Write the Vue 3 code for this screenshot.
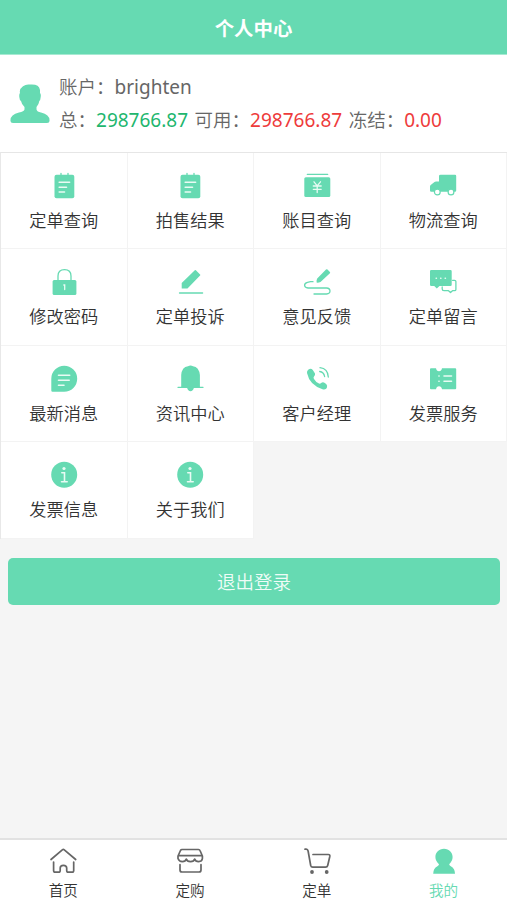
<template>
    <div class="page">
        <header class="header">个人中心</header>

        <section class="account">
            <svg class="avatar" viewBox="0 0 40 40">
                <path
                    d="M13 2.200Q16 0 20 .6Q29 -.2 30 6V9Q31.200 10 30.700 13Q30.500 16 29.300 17Q29 20 26.500 23V25.500Q27 27.800 31 28.500Q40 30.500 39.500 37Q39.500 39 37 39H3Q.5 39 .5 37Q0 30.500 9 28.500Q14 27.500 14.500 25.500V23Q11.500 20 11 17Q9.500 16 9.300 13Q9 10 10 9Q9 5 13 2.200Z" />
            </svg>
            <div class="info">
                <div class="line">账户：<span class="latin">{{ user.name }}</span></div>
                <div class="line">
                    总：<span class="latin green">{{ user.total }}</span>
                    <span class="gap">可用：</span><span class="latin red">{{ user.usable }}</span>
                    <span class="gap">冻结：</span><span class="latin red">{{ user.frozen }}</span>
                </div>
            </div>
        </section>

        <nav class="menu">
            <div v-for="item in menus" :key="item.name" class="cell">
                <svg class="icon" viewBox="0 0 26 26" v-html="icons[item.icon]"></svg>
                <span>{{ item.name }}</span>
            </div>
        </nav>

        <button class="logout">退出登录</button>

        <footer class="tabbar">
            <div
                v-for="tab in tabs"
                :key="tab.name"
                class="tab"
                :class="{ active: current === tab.name }"
                @click="current = tab.name"
            >
                <svg class="icon" viewBox="0 0 26 26" v-html="icons[tab.icon]"></svg>
                <span>{{ tab.name }}</span>
            </div>
        </footer>
    </div>
</template>

<script setup>
import { reactive, ref } from 'vue'

const user = reactive({
    name: 'brighten',
    total: '298766.87',
    usable: '298766.87',
    frozen: '0.00',
})

const current = ref('我的')

const menus = [
    { name: '定单查询', icon: 'note' },
    { name: '拍售结果', icon: 'note' },
    { name: '账目查询', icon: 'bill' },
    { name: '物流查询', icon: 'truck' },
    { name: '修改密码', icon: 'lock' },
    { name: '定单投诉', icon: 'edit' },
    { name: '意见反馈', icon: 'feedback' },
    { name: '定单留言', icon: 'chat' },
    { name: '最新消息', icon: 'news' },
    { name: '资讯中心', icon: 'bell' },
    { name: '客户经理', icon: 'phone' },
    { name: '发票服务', icon: 'ticket' },
    { name: '发票信息', icon: 'about' },
    { name: '关于我们', icon: 'about' },
]

const tabs = [
    { name: '首页', icon: 'home' },
    { name: '定购', icon: 'shop' },
    { name: '定单', icon: 'cart' },
    { name: '我的', icon: 'me' },
]

// 圖示，f = 填色，s = 線條，w = 白色線條
const icons = {
    note: `<rect class="f" x="3.500" y="1.800" width="19.800" height="23.400" rx="2"/>
        <path class="s thin" d="M10 .3V3M17 .3V3"/>
        <path class="w" d="M8.200 9.300H18.600M8.200 14.300H15.500M8.200 19H13.500"/>`,
    bill: `<path class="s thin" d="M3.300 1.300H23.700"/>
        <rect class="f" x=".3" y="4.300" width="26" height="19.700" rx="1.500"/>
        <path class="w thin" d="M10 8.800L13.200 12.800L16.500 8.800M9.300 13H17.200M9.300 16.300H17.200M13.200 13V19.500"/>`,
    truck: `<path class="f" d="M10.500 1.700H25Q26.200 1.700 26.200 3V17.500Q26.200 18.800 25 18.800H1.200Q0 18.800 0 17.500V13.500Q0 12.500 1 11.800L4.500 9Q5 8.500 6 8.500H9V3Q9 1.700 10.500 1.700Z"/>
        <circle class="hole" cx="7.300" cy="19" r="2.900"/>
        <circle class="hole" cx="21" cy="19" r="2.900"/>`,
    lock: `<path class="s thin" d="M7 12V7Q7 .7 13.500 .7T20 7V12"/>
        <rect class="f" x="1.600" y="11" width="23.800" height="15" rx="1.500"/>
        <path class="w thin" d="M12.800 16H13.700V20.500"/>`,
    edit: `<path class="f" d="M17.800 1.300Q18.300 .8 18.900 1.300L23.100 5.500Q23.600 6 23.100 6.600L10.500 19.500H4.700V14Z"/>
        <path class="s thin" d="M2.500 24H25.600"/>`,
    feedback: `<path class="f" d="M22 .5Q22.800-.2 23.500.5L25.900 2.900Q26.500 3.700 25.900 4.300L16.500 13Q14 14 12.600 13.500Q12.300 11 13.200 9.500Z"/>
        <path class="s thin" d="M9 12.700H6.500L3.500 13.300Q.6 14 .6 16.300T4 19H22.500Q26 19.300 26 22T22.500 25H10"/>`,
    chat: `<path class="f" d="M1.200 1H20.500Q21.700 1 21.700 2.200V15.800Q21.700 17 20.500 17H9.500L6.800 19.500L4.200 17H1.200Q0 17 0 15.800V2.200Q0 1 1.200 1Z"/>
        <path class="s thin" d="M22.500 11.300H24.500Q25.900 11.300 25.900 12.500V20.500Q25.900 21.700 24.500 21.700H22.500L20.500 23.500L18.500 21.700H14Q12.200 21.700 12.200 20V18"/>
        <path class="w" d="M6.200 9.200H6.400M10.700 9.200H10.900M15.200 9.200H15.400"/>`,
    news: `<path class="f" d="M13.200-.3A13 13 0 0 1 13.200 25.700H1.500Q.3 25.700 .3 24.500V12.700A13 13 0 0 1 13.200-.3Z"/>
        <path class="w" d="M7.500 9.200H18.700M7.500 14.200H18.200M7.500 19.200H13"/>`,
    bell: `<path class="f" d="M4.200 21V9Q4.800 1 11 .2Q13.500-1 16 .2Q22 1 22.900 9V21L17 21.500Q16 25.300 13.500 25.300T10 21.500Z"/>
        <path class="s thin" d="M1 21.300H26"/>`,
    phone: `<path class="f" d="M4.500 3.500Q7 2 8.800 4L11 7.500Q11.500 9 10 10.500Q9 11.500 10 13Q12 16.500 15 17.500Q16 18 17.500 16.700Q18.500 15.800 20 16.500L22.200 18Q23.800 19.500 22.800 22Q21.800 24 18.500 23.200Q5.500 19 3 7Q2.700 4.800 4.500 3.500Z"/>
        <path class="s thin" d="M15.700 5.500Q19.800 6 20.600 10.500M16 1.700Q23.800 2.500 24.300 11"/>`,
    ticket: `<path class="f" d="M1 2.300H6Q6.500 5.200 9 5.200T12 2.300H25.200Q26.200 2.300 26.200 3.300V22.200Q26.200 23.200 25.200 23.200H12Q11.500 20.300 9 20.300T6 23.200H1Q0 23.200 0 22.200V3.300Q0 2.300 1 2.300Z"/>
        <path class="w" d="M8.900 10H9.100M8.900 15.300H9.100M14 10H21.500M14 15.300H21.500"/>`,
    about: `<circle class="f" cx="13.200" cy="12.800" r="13"/>
        <circle class="dot" cx="13" cy="6.500" r="1.600"/>
        <path class="w" d="M10.800 10.800H13.500V19.500M10.500 19.700H16.200"/>`,
    home: `<path class="s" d="M1 11.500L12.300 1.800Q13.300 1 14.300 1.800L25.700 11.500M3.600 14V22.500Q3.600 24.200 5.300 24.200H8.500Q10.200 24.200 10.200 22.500V20Q10.200 17.300 13.400 17.300T16.700 20V22.500Q16.700 24.200 18.300 24.200H22Q23.700 24.200 23.700 22.500V14"/>`,
    shop: `<path class="s" d="M5 1.500H21.500Q22.600 1.500 23 2.500L25.400 8V10.500Q25 13.600 21.700 13.600T17.700 11Q17 13.600 13.500 13.600T9.300 11Q8.500 13.600 5.300 13.600T1 10.500V8L3.500 2.500Q4 1.500 5 1.500ZM1.500 7.700H25M3 16.700V22Q3 24 5 24H22Q24 24 24 22V16.700"/>`,
    cart: `<path class="s" d="M1 1.200H2.200Q3.700 1.300 4.100 3L6.700 17.500Q7.100 19.200 8.700 19.200H21.500Q23.300 19.200 23.700 17.500L25.800 8.500Q26.200 6.500 24.300 6.500H9"/>
        <circle class="f" cx="8" cy="24" r="1.900"/><circle class="f" cx="22.700" cy="24" r="1.900"/>`,
    me: `<path class="f" d="M13 .8C18.100.8 21.600 4.500 21.600 9Q21.600 13 18.200 16.200Q18.200 17.300 19.800 18.200Q24 20.500 24 25.700H2.200Q2.200 20.500 6.400 18.200Q8 17.300 8 16.200Q4.400 13 4.400 9C4.400 4.500 7.900 .8 13 .8Z"/>`,
}
</script>

<style>
body {
    margin: 0;
    background-color: #f5f5f5;
}
</style>

<style scoped>
.page {
    display: flex;
    flex-direction: column;
    height: 100vh;
    background-color: #f5f5f5;
    font-family: 'Noto Sans CJK SC', sans-serif;
    font-weight: 350;
    color: #333;
}

.header {
    flex: none;
    height: 54px;
    line-height: 56px;
    background-color: #66dab2;
    color: #fff;
    font-size: 19.400px;
    font-weight: bold;
    text-align: center;
    border-bottom: 1px solid #a6ead2;
}

.account {
    display: flex;
    flex: none;
    box-sizing: border-box;
    height: 97px;
    padding: 15px 0 0 10px;
    background-color: #fff;
}

.avatar {
    width: 40px;
    height: 40px;
    margin: 14px 9px 0 0;
    fill: #66dab2;
}

.line {
    height: 33px;
    line-height: 33px;
    font-size: 18.500px;
    color: #666;
    white-space: nowrap;
}

.latin {
    font-family: 'Noto Sans', sans-serif;
    font-size: 19px;
    font-weight: 400;
}

.gap {
    margin-left: 6.500px;
}

.green {
    color: #21b66e;
}

.red {
    color: #ee3b3b;
}

.menu {
    display: grid;
    flex: none;
    grid-template-columns: repeat(4, 1fr);
    grid-auto-rows: 96.400px;
    /* 外框 */
    border-top: 1px solid #e6e6e6;
    border-left: 1px solid #e8e8e8;
}

.cell {
    display: flex;
    flex-direction: column;
    align-items: center;
    box-sizing: border-box;
    padding-top: 20px;
    background-color: #fff;
    border-right: 1px solid #f3f3f3;
    border-bottom: 1px solid #f3f3f3;
    font-size: 17.200px;
    line-height: 26px;
}

.icon {
    width: 26px;
    height: 26px;
    overflow: visible;
    color: #66dab2;
}

.cell .icon {
    margin-bottom: 8px;
}

.icon :deep(.f) {
    fill: currentColor;
}

.icon :deep(.s) {
    fill: none;
    stroke: currentColor;
    stroke-width: 1.700;
    stroke-linecap: round;
    stroke-linejoin: round;
}

.icon :deep(.w) {
    fill: none;
    stroke: #e9fbf4;
    stroke-width: 1.600;
    stroke-linecap: round;
}

.icon :deep(.thin) {
    stroke-width: 1.300;
}

.icon :deep(.hole) {
    fill: #fff;
    stroke: currentColor;
    stroke-width: 1.200;
}

.icon :deep(.dot) {
    fill: #e9fbf4;
}

.logout {
    flex: none;
    height: 47px;
    margin: 19px 7px 0 8px;
    padding: 0;
    border: none;
    border-radius: 5px;
    background-color: #66dab2;
    color: #effcf7;
    font-family: inherit;
    font-size: 18.500px;
    font-weight: inherit;
    line-height: 47px;
    cursor: pointer;
}

.tabbar {
    display: grid;
    grid-template-columns: repeat(4, 1fr);
    box-sizing: border-box;
    height: 62px;
    margin-top: auto;
    border-top: 2px solid #e2e2e2;
    background-color: #fff;
}

.tab {
    display: flex;
    flex-direction: column;
    align-items: center;
    padding-top: 8px;
    font-size: 14.600px;
    line-height: 22px;
    cursor: pointer;
}

.tab .icon {
    margin-bottom: 5px;
    color: #666;
}

.tab.active,
.tab.active .icon {
    color: #66dab2;
}
</style>
